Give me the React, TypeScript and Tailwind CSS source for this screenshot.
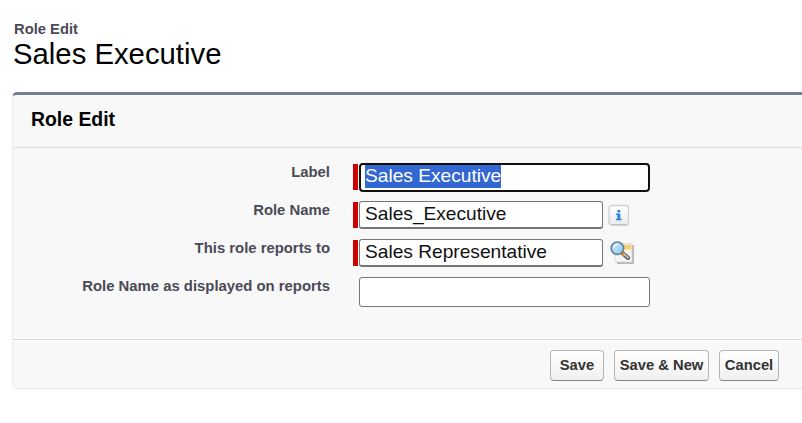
import type { ReactNode } from 'react';

function Row({ label, required, children }: { label: string; required?: boolean; children: ReactNode }) {
  return (
    <div className="flex h-[38px] items-start">
      <div className="mt-px w-[317px] shrink-0 text-right text-[14.87px] leading-[18px] font-bold whitespace-nowrap text-[#4a4a56]">
        {label}
      </div>
      <div className={`mt-[2px] mr-px ml-[23px] h-[26px] w-[5px] shrink-0 ${required ? 'bg-[#cc0000]' : ''}`} />
      {children}
    </div>
  );
}

function Field({ value }: { value: string }) {
  return (
    <div className="h-[28px] w-[244px] rounded-[3px] border border-b-2 border-[#767676] bg-white pl-[5px] text-[19.15px] leading-[24px] whitespace-nowrap text-[#111]">
      {value}
    </div>
  );
}

function Button({ children, size }: { children: ReactNode; size: string }) {
  return (
    <button
      className={`flex h-[31px] items-center justify-center rounded-[4px] border border-[#b5b5b5] border-b-[#858585] bg-linear-to-b from-white to-[#f0f0f0] text-[14.75px] font-bold whitespace-nowrap text-[#333] ${size}`}
    >
      {children}
    </button>
  );
}

function InfoIcon() {
  return (
    <svg className="mt-[3px] ml-[5px] shrink-0" width="22" height="22" viewBox="0 0 22 22">
      <defs>
        <linearGradient id="info-fill" x1="0" y1="0" x2="0" y2="1">
          <stop offset="0" stopColor="#ffffff" />
          <stop offset="1" stopColor="#e9ebef" />
        </linearGradient>
      </defs>
      <rect x="1" y="1.5" width="19.5" height="19.5" rx="3" fill="url(#info-fill)" stroke="#cfcfcf" strokeWidth="1.3" />
      <path d="M3 20.8H19" stroke="#bcbcbc" />
      <rect x="9.3" y="6" width="3" height="2.4" rx=".6" fill="#2f83dc" />
      <path d="M7.9 9.6H12.3V14.7H13.7V16.2H7.9V14.7H9.3V11H7.9Z" fill="#2f83dc" />
    </svg>
  );
}

function LookupIcon() {
  return (
    <svg className="mt-px ml-[6px] shrink-0" width="26" height="26" viewBox="0 0 26 26">
      <defs>
        <linearGradient id="lens" x1="0" y1="0" x2="1" y2="1">
          <stop offset="0" stopColor="#d5eaf5" />
          <stop offset=".5" stopColor="#b0daf2" />
          <stop offset="1" stopColor="#8fc6e9" />
        </linearGradient>
      </defs>
      <path d="M8 5H24.8V23.8H8Z" fill="#a8a8a8" />
      <path d="M6 3.5H23V22H6Z" fill="#f5f5f5" stroke="#dcdcdc" />
      <path d="M14 4.5H22.5V9.5H14Z" fill="#fbd071" />
      <path d="M14 4.3H22.5" stroke="#efe3c7" />
      <path d="M13.2 12.8L19 17.8" stroke="#55565a" strokeWidth="4.2" strokeLinecap="round" />
      <path d="M12.4 12.2L15.8 15.1" stroke="#d9892c" strokeWidth="3.6" />
      <path d="M15.7 14.8L19.2 17.7" stroke="#c2c0be" strokeWidth="2" strokeLinecap="round" />
      <circle cx="8.4" cy="8.2" r="6.2" fill="url(#lens)" stroke="#64859c" strokeWidth="1.7" />
      <path d="M4.5 7.5Q5.5 4.5 9 4.3" fill="none" stroke="#eef9ff" strokeWidth="1.3" />
    </svg>
  );
}

export default function App() {
  return (
    <main className="h-[423px] w-[802px] overflow-hidden bg-white pt-[20px] pl-[12px] font-['Liberation_Sans',Arial,sans-serif]">
      <header className="h-[72px]">
        <p className="pl-[2px] text-[14.75px] leading-[18px] font-bold text-[#4a4a56]">Role Edit</p>
        <h1 className="pl-[1px] text-[29.3px] leading-[32px] text-black">Sales Executive</h1>
      </header>

      <section className="h-[297px] w-[810px] overflow-hidden rounded-[5px] border border-t-[3px] border-[#eaeaea] border-t-[#747e96] bg-[#f8f8f8]">
        <div className="h-[53px] border-b border-[#dddddd] pt-[12px] pl-[18px]">
          <h2 className="text-[19.4px] leading-[24px] font-bold text-black">Role Edit</h2>
        </div>

        <div className="h-[192px] border-b border-[#d8d8d8] pt-[14px] shadow-[0_1px_0_white]">
          <Row label="Label" required>
            <div className="mt-px h-[29px] w-[291px] rounded-[4px] border-2 border-[#101010] bg-white pl-[4px] text-[19.15px] leading-[22px] text-white">
              <span className="flex h-[23px] w-[136px] bg-[#3367d1] whitespace-nowrap">Sales Executive</span>
            </div>
          </Row>
          <Row label="Role Name" required>
            <div className="mt-px flex">
              <Field value="Sales_Executive" />
              <InfoIcon />
            </div>
          </Row>
          <Row label="This role reports to" required>
            <div className="mt-px flex">
              <Field value="Sales Representative" />
              <LookupIcon />
            </div>
          </Row>
          <Row label="Role Name as displayed on reports">
            <div className="mt-px h-[30px] w-[291px] rounded-[3px] border border-[#767676] bg-white" />
          </Row>
        </div>

        <div className="flex pt-[9.5px] pl-[537px]">
          <Button size="w-[54px]">Save</Button>
          <Button size="ml-[10px] w-[95px]">Save &amp; New</Button>
          <Button size="ml-[10px] w-[60px]">Cancel</Button>
        </div>
      </section>
    </main>
  );
}
